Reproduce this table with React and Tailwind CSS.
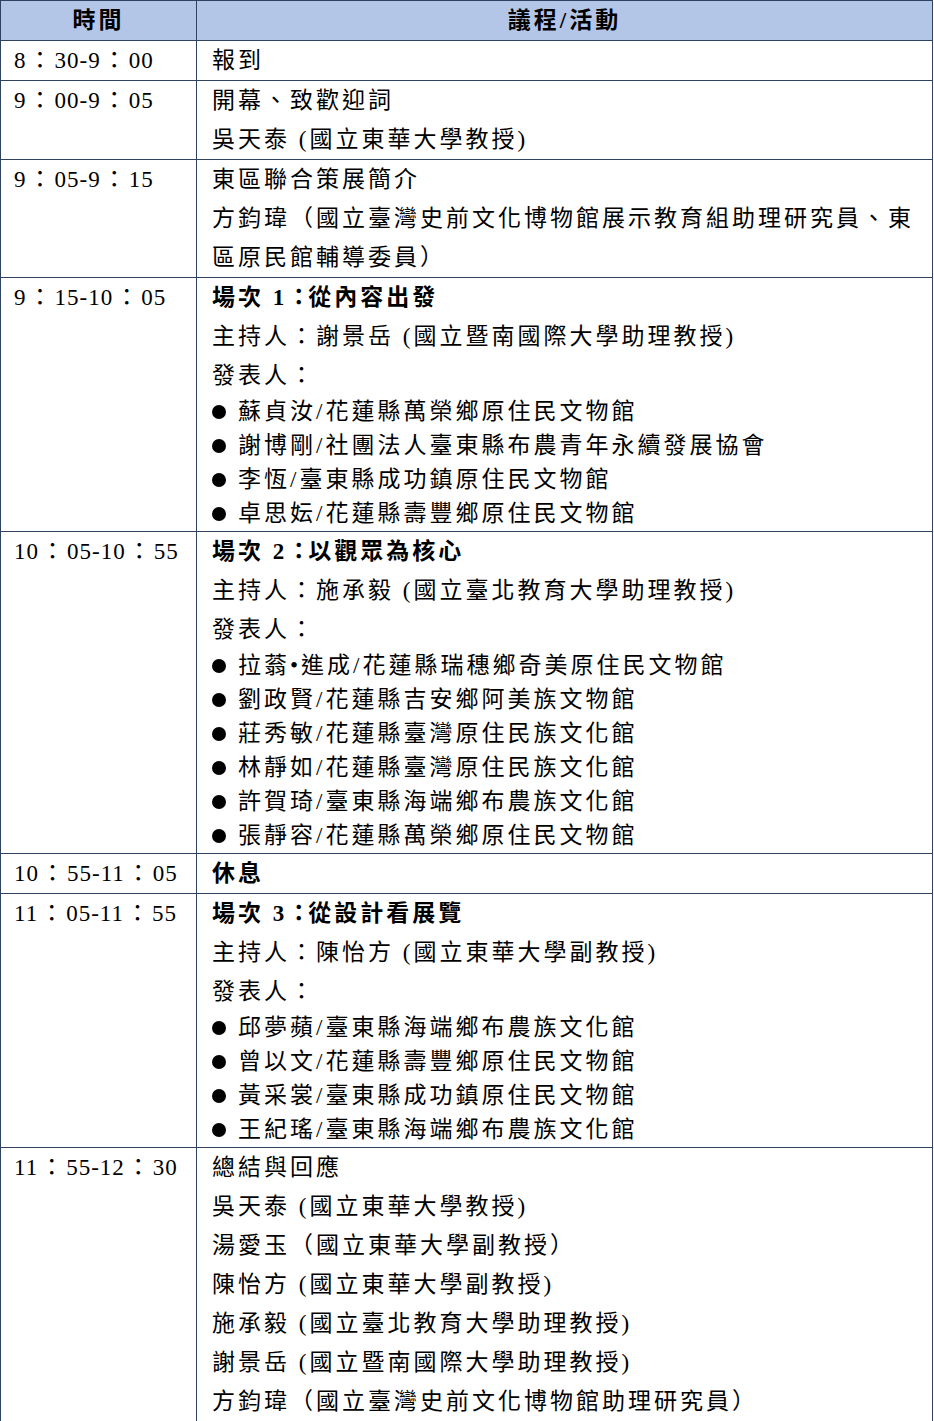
const font = { fontFamily: '"Liberation Serif", "Noto Sans CJK TC", serif' };

// slightly tighter colon used in the bold session titles
const Colon = () => <span className="tracking-[-2px]">：</span>;

const Time = ({ a, b, c, d }) => (
    <span className="tracking-[1px]">
        {a}<span className="mx-[2px]">：</span>{b}-{c}<span className="mx-[2px]">：</span>{d}
    </span>
);

const Line = ({ children, bold }) => (
    <div className={'leading-[39px] whitespace-nowrap ' + (bold ? 'font-bold' : '')}>{children}</div>
);

const Bullet = ({ children }) => (
    <div className="flex items-center leading-[34px] whitespace-nowrap">
        <span className="inline-block w-[14px] h-[14px] rounded-full bg-black mr-[12px] shrink-0" />
        <span>{children}</span>
    </div>
);

const rows = [
    {
        time: ['8', '30', '9', '00'],
        body: <Line>報到</Line>
    },
    {
        time: ['9', '00', '9', '05'],
        body: (
            <>
                <Line>開幕、致歡迎詞</Line>
                <Line>吳天泰 (國立東華大學教授)</Line>
            </>
        )
    },
    {
        time: ['9', '05', '9', '15'],
        body: (
            <>
                <Line>東區聯合策展簡介</Line>
                <Line>方鈞瑋（國立臺灣史前文化博物館展示教育組助理研究員、東</Line>
                <Line>區原民館輔導委員）</Line>
            </>
        )
    },
    {
        time: ['9', '15', '10', '05'],
        body: (
            <>
                <Line bold>場次 1<Colon />從內容出發</Line>
                <Line>主持人：謝景岳 (國立暨南國際大學助理教授)</Line>
                <Line>發表人：</Line>
                <Bullet>蘇貞汝/花蓮縣萬榮鄉原住民文物館</Bullet>
                <Bullet>謝博剛/社團法人臺東縣布農青年永續發展協會</Bullet>
                <Bullet>李恆/臺東縣成功鎮原住民文物館</Bullet>
                <Bullet>卓思妘/花蓮縣壽豐鄉原住民文物館</Bullet>
            </>
        )
    },
    {
        time: ['10', '05', '10', '55'],
        body: (
            <>
                <Line bold>場次 2<Colon />以觀眾為核心</Line>
                <Line>主持人：施承毅 (國立臺北教育大學助理教授)</Line>
                <Line>發表人：</Line>
                <Bullet>拉蓊•進成/花蓮縣瑞穗鄉奇美原住民文物館</Bullet>
                <Bullet>劉政賢/花蓮縣吉安鄉阿美族文物館</Bullet>
                <Bullet>莊秀敏/花蓮縣臺灣原住民族文化館</Bullet>
                <Bullet>林靜如/花蓮縣臺灣原住民族文化館</Bullet>
                <Bullet>許賀琦/臺東縣海端鄉布農族文化館</Bullet>
                <Bullet>張靜容/花蓮縣萬榮鄉原住民文物館</Bullet>
            </>
        )
    },
    {
        time: ['10', '55', '11', '05'],
        body: <Line bold>休息</Line>
    },
    {
        time: ['11', '05', '11', '55'],
        body: (
            <>
                <Line bold>場次 3<Colon />從設計看展覽</Line>
                <Line>主持人：陳怡方 (國立東華大學副教授)</Line>
                <Line>發表人：</Line>
                <Bullet>邱夢蘋/臺東縣海端鄉布農族文化館</Bullet>
                <Bullet>曾以文/花蓮縣壽豐鄉原住民文物館</Bullet>
                <Bullet>黃采裳/臺東縣成功鎮原住民文物館</Bullet>
                <Bullet>王紀瑤/臺東縣海端鄉布農族文化館</Bullet>
            </>
        )
    },
    {
        time: ['11', '55', '12', '30'],
        body: (
            <>
                <Line>總結與回應</Line>
                <Line>吳天泰 (國立東華大學教授)</Line>
                <Line>湯愛玉（國立東華大學副教授）</Line>
                <Line>陳怡方 (國立東華大學副教授)</Line>
                <Line>施承毅 (國立臺北教育大學助理教授)</Line>
                <Line>謝景岳 (國立暨南國際大學助理教授)</Line>
                <Line>方鈞瑋（國立臺灣史前文化博物館助理研究員）</Line>
            </>
        )
    }
];

export default function App() {
    return (
        <div className="bg-white w-[934px] text-black text-[23px] tracking-[3px]" style={font}>
            <table className="table-fixed border-collapse w-[933px]">
                <colgroup>
                    <col className="w-[196px]" />
                    <col />
                </colgroup>
                <thead>
                    <tr className="bg-[#b4c6e7]">
                        <th className="border border-[#2e4360] font-bold text-center leading-[39px] p-0">時間</th>
                        <th className="border border-[#2e4360] font-bold text-center leading-[39px] p-0">議程/活動</th>
                    </tr>
                </thead>
                <tbody>
                    {rows.map((row, i) => (
                        <tr key={i}>
                            <td className="border border-[#2e4360] align-top pl-[13px] py-0 leading-[39px] whitespace-nowrap">
                                <Time a={row.time[0]} b={row.time[1]} c={row.time[2]} d={row.time[3]} />
                            </td>
                            <td className="border border-[#2e4360] align-top pl-[15px] pr-0 py-0">{row.body}</td>
                        </tr>
                    ))}
                </tbody>
            </table>
        </div>
    );
}
